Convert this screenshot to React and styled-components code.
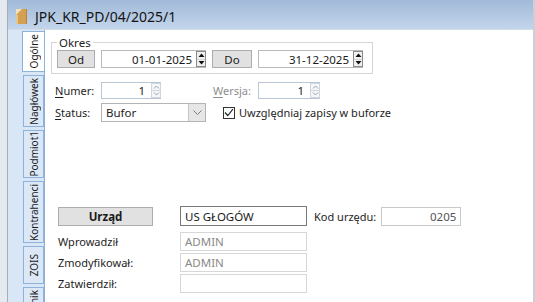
import React from "react";
import styled, { createGlobalStyle } from "styled-components";

const GlobalStyle = createGlobalStyle`
  html, body { margin: 0; padding: 0; background: #fff; }
  body {
    font-family: "Noto Sans", "Open Sans", sans-serif;
    font-size: 11px;
    color: #1e1e1e;
  }
  * { box-sizing: border-box; }
`;

const Window = styled.div`
  width: 535px;
  height: 302px;
  overflow: hidden;
  display: flex;
  background: #e5eaf0;
  padding-left: 7px;
  border-right: 2px solid #c8d0d9;
`;

const Frame = styled.div`
  flex: 1;
  min-width: 0;
  display: flex;
  flex-direction: column;
  border-left: 1px solid #a3afbd;
`;

const TitleBar = styled.div`
  height: 30px;
  flex-shrink: 0;
  display: flex;
  align-items: center;
  gap: 8px;
  padding-left: 8px;
  padding-top: 4px;
  border-bottom: 1px solid #d4dce5;
  background: linear-gradient(#a1bad9, #c3d5eb);
  font-size: 14px;
  color: #141414;
`;

const Body = styled.div`
  flex: 1;
  display: flex;
  min-height: 0;
`;

const TabStrip = styled.div`
  width: 37px;
  flex-shrink: 0;
  display: flex;
  flex-direction: column;
  gap: 3px;
  padding: 1px 0 0 15px;
  background: #d9e6f5;
  border-right: 1px solid #8fb0d6;
`;

const Tab = styled.div`
  width: ${(p) => (p.$active ? 23 : 21)}px;
  margin-left: ${(p) => (p.$active ? -1 : 0)}px;
  height: ${(p) => p.$h}px;
  flex-shrink: 0;
  display: flex;
  align-items: ${(p) => (p.$clip ? "flex-start" : "center")};
  padding-top: ${(p) => (p.$clip ? 2 : 0)}px;
  justify-content: center;
  background: ${(p) => (p.$active ? "#ffffff" : "#dce8f6")};
  border: 1px solid #8db2dc;
  font-size: 10px;
  color: #1a1a1a;
  overflow: hidden;
  span {
    writing-mode: vertical-rl;
    transform: rotate(180deg);
    white-space: nowrap;
  }
`;

const Content = styled.div`
  flex: 1;
  background: #fff;
  padding-left: 6px;
`;

const Group = styled.fieldset`
  margin: 6px 0 0 0;
  width: 322px;
  padding: 1px 0 5px 5px;
  border: 1px solid #d6d6d6;
  legend {
    padding: 0 2px;
    font-size: 11.5px;
    line-height: 13px;
    color: #1e1e1e;
  }
`;

const Row = styled.div`
  display: flex;
  align-items: center;
  gap: ${(p) => p.$gap ?? 6}px;
  margin-top: ${(p) => p.$top ?? 0}px;
  padding-left: ${(p) => p.$pad ?? 0}px;
`;

const Button = styled.div`
  width: ${(p) => p.$w}px;
  height: ${(p) => p.$h ?? 18}px;
  display: flex;
  align-items: center;
  justify-content: center;
  background: #e1e1e1;
  border: 1px solid #adadad;
  font-size: 11.5px;
  font-weight: ${(p) => (p.$bold ? 700 : 400)};
  color: #1a1a1a;
`;

const Field = styled.div`
  width: ${(p) => p.$w}px;
  height: ${(p) => p.$h ?? 18}px;
  flex-shrink: 0;
  display: flex;
  align-items: center;
  justify-content: ${(p) => (p.$right ? "flex-end" : "flex-start")};
  padding: 0 ${(p) => p.$pr ?? 4}px 0 4px;
  border: 1px solid ${(p) => p.$border ?? "#bababa"};
  background: #fff;
  font-size: 11.5px;
  color: ${(p) => p.$color ?? "#1a1a1a"};
  white-space: nowrap;
`;

const FieldText = styled.span`
  flex: 1;
  text-align: ${(p) => (p.$right ? "right" : "left")};
  padding-right: ${(p) => p.$gap ?? 0}px;
`;

const Spin = styled.div`
  width: 10px;
  height: ${(p) => p.$h}px;
  display: flex;
  flex-direction: column;
  border: 1px solid ${(p) => (p.$soft ? "#d0d6de" : "#8a8a8a")};
  background: ${(p) => (p.$soft ? "#f4f6f9" : "#f0f0f0")};
  margin-right: -3px;
`;

const SpinHalf = styled.div`
  flex: 1;
  display: flex;
  align-items: center;
  justify-content: center;
  & + & {
    border-top: 1px solid ${(p) => (p.$soft ? "#d0d6de" : "#8a8a8a")};
  }
`;

const Label = styled.div`
  width: ${(p) => (p.$w ? `${p.$w}px` : "auto")};
  flex-shrink: 0;
  font-size: 11px;
  color: ${(p) => (p.$disabled ? "#8e8e8e" : "#1e1e1e")};
  white-space: nowrap;
  u { text-decoration: underline; text-underline-offset: 2px; }
`;

const Combo = styled.div`
  width: 105px;
  height: 19px;
  display: flex;
  border: 1px solid #b4b4b4;
  font-size: 11.5px;
`;

const ComboText = styled.div`
  flex: 1;
  display: flex;
  align-items: center;
  padding-left: 4px;
`;

const ComboButton = styled.div`
  width: 17px;
  display: flex;
  align-items: center;
  justify-content: center;
  background: #e6e6e6;
  border-left: 1px solid #c3c3c3;
`;

const Check = styled.div`
  width: 12px;
  height: 12px;
  margin-left: 17px;
  border: 1px solid #333;
  background: #fff;
  display: flex;
  align-items: center;
  justify-content: center;
`;

const Bottom = styled.div`
  margin-top: 84px;
  padding-left: 7px;
`;

const MetaGrid = styled.div`
  margin-top: 6px;
  display: grid;
  grid-template-columns: 122px 127px;
  grid-auto-rows: 19px;
  row-gap: 2px;
  align-items: center;
`;

const Arrow = ({ up, soft }) => (
  <svg width="7" height="4" viewBox="0 0 7 4">
    {soft ? (
      <polyline
        points={up ? "1,3.5 3.5,1 6,3.5" : "1,0.5 3.5,3 6,0.5"}
        fill="none"
        stroke="#9aa3ad"
        strokeWidth="1"
      />
    ) : (
      <polygon points={up ? "0.5,4 3.5,0.5 6.5,4" : "0.5,0 3.5,3.5 6.5,0"} fill="#111" />
    )}
  </svg>
);

const Spinner = ({ h, soft }) => (
  <Spin $h={h} $soft={soft}>
    <SpinHalf $soft={soft}>
      <Arrow up soft={soft} />
    </SpinHalf>
    <SpinHalf $soft={soft}>
      <Arrow soft={soft} />
    </SpinHalf>
  </Spin>
);

const DocIcon = () => (
  <svg width="11" height="15" viewBox="0 0 11 15">
    <rect x="0" y="0" width="11" height="15" fill="#d4a052" />
    <polygon points="0,0 6,0 0,6" fill="#f3e2c0" />
    <rect x="0" y="6" width="2" height="9" fill="#e7c58e" />
    <rect x="10" y="0" width="1" height="15" fill="#b9843a" />
  </svg>
);

const tabs = [
  { label: "Ogólne", h: 41, active: true },
  { label: "Nagłówek", h: 52 },
  { label: "Podmiot1", h: 48 },
  { label: "Kontrahenci", h: 62 },
  { label: "ZOIS", h: 38 },
  { label: "Dziennik", h: 52, clip: true },
];

const DateField = ({ value }) => (
  <Field $w={105} $right $pr={2}>
    <FieldText $right $gap={4}>{value}</FieldText>
    <Spinner h={16} />
  </Field>
);

const NumField = ({ w }) => (
  <Field $w={w} $h={17} $right $pr={2} $border="#b9c6d6">
    <FieldText $right $gap={6}>1</FieldText>
    <Spinner h={15} soft />
  </Field>
);

export default function App() {
  return (
    <>
      <GlobalStyle />
      <Window>
        <Frame>
          <TitleBar>
            <DocIcon />
            <span>JPK_KR_PD/04/2025/1</span>
          </TitleBar>
          <Body>
            <TabStrip>
              {tabs.map((t) => (
                <Tab key={t.label} $h={t.h} $active={t.active} $clip={t.clip}>
                  <span>{t.label}</span>
                </Tab>
              ))}
            </TabStrip>
            <Content>
              <Group>
                <legend>Okres</legend>
                <Row>
                  <Button $w={38}>Od</Button>
                  <DateField value="01-01-2025" />
                  <Button $w={40}>Do</Button>
                  <DateField value="31-12-2025" />
                </Row>
              </Group>

              <Row $top={8} $pad={4} $gap={0}>
                <Label $w={46}>
                  <u>N</u>umer:
                </Label>
                <NumField w={60} />
                <Label $w={97} $disabled style={{ paddingLeft: 52 }}>
                  <u>W</u>ersja:
                </Label>
                <NumField w={62} />
              </Row>

              <Row $top={4} $pad={4} $gap={0}>
                <Label $w={46}>
                  <u>S</u>tatus:
                </Label>
                <Combo>
                  <ComboText>Bufor</ComboText>
                  <ComboButton>
                    <svg width="9" height="5" viewBox="0 0 9 5">
                      <polyline points="0.5,0.5 4.5,4.5 8.5,0.5" fill="none" stroke="#7a7a7a" strokeWidth="1" />
                    </svg>
                  </ComboButton>
                </Combo>
                <Check>
                  <svg width="10" height="9" viewBox="0 0 10 9">
                    <polyline points="1,4.5 3.8,7.5 9,1" fill="none" stroke="#222" strokeWidth="1.2" />
                  </svg>
                </Check>
                <Label style={{ marginLeft: 4 }}>Uwzględniaj zapisy w buforze</Label>
              </Row>

              <Bottom>
                <Row $gap={0}>
                  <Button $w={95} $h={19} $bold>
                    Urząd
                  </Button>
                  <Field $w={127} $h={20} $border="#7a7a7a" style={{ marginLeft: 27 }}>
                    US GŁOGÓW
                  </Field>
                  <Label style={{ marginLeft: 7, marginRight: 5 }}>Kod urzędu:</Label>
                  <Field $w={80} $h={19} $right $border="#c9c9c9" $color="#555">
                    0205
                  </Field>
                </Row>
                <MetaGrid>
                  <Label>Wprowadził</Label>
                  <Field $w={127} $h={19} $border="#d7d7d7" $color="#8a8a8a">ADMIN</Field>
                  <Label>Zmodyfikował:</Label>
                  <Field $w={127} $h={19} $border="#d7d7d7" $color="#8a8a8a">ADMIN</Field>
                  <Label>Zatwierdził:</Label>
                  <Field $w={127} $h={19} $border="#d7d7d7" />
                </MetaGrid>
              </Bottom>
            </Content>
          </Body>
        </Frame>
      </Window>
    </>
  );
}
